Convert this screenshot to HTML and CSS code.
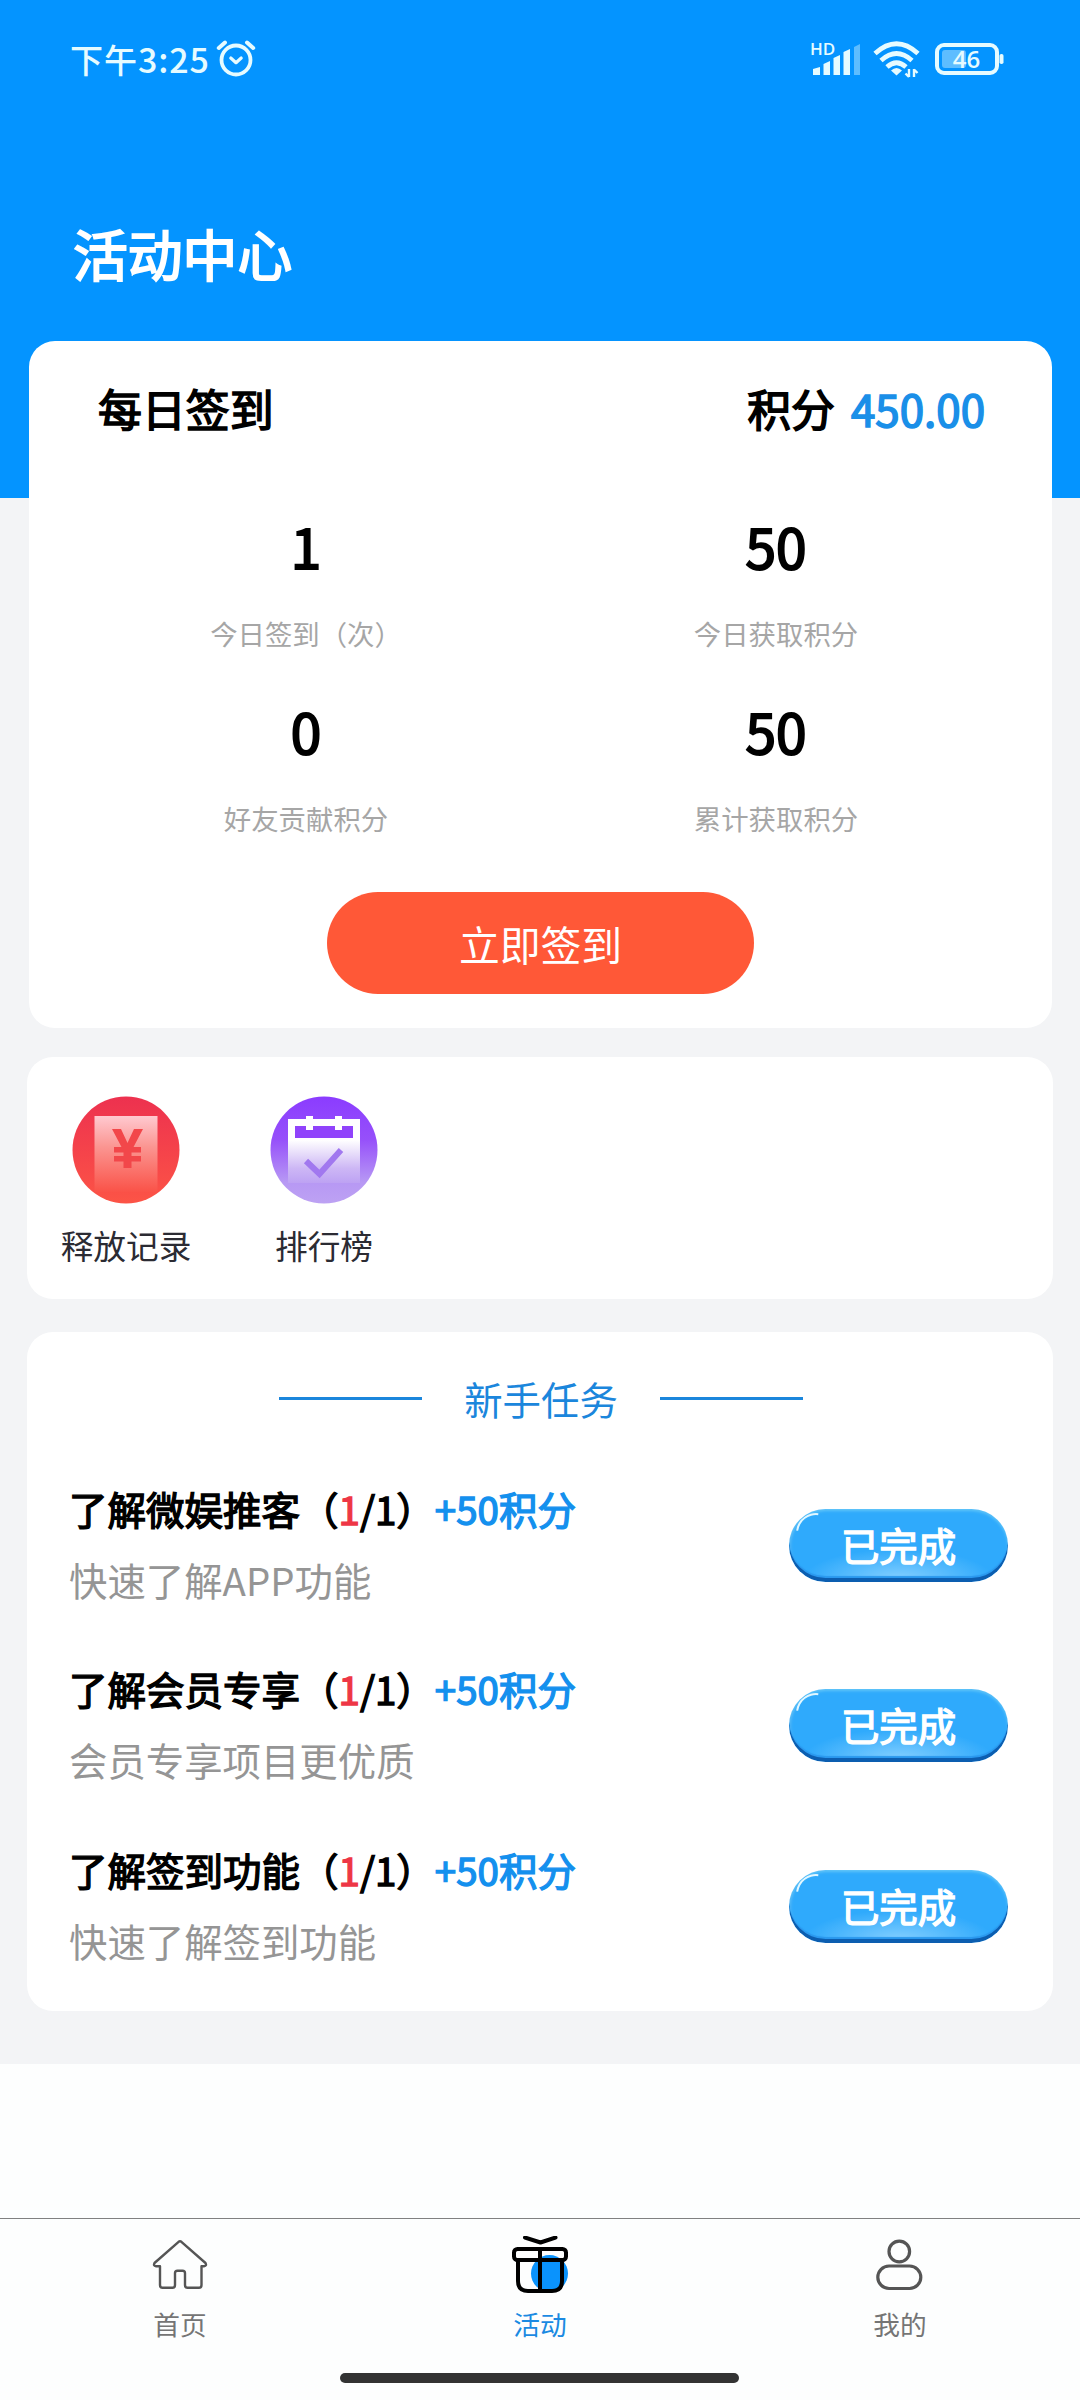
FILE: index.html
```html
<!DOCTYPE html>
<html lang="zh-CN">
<head>
<meta charset="utf-8">
<title>活动中心</title>
<link rel="stylesheet" href="styles.css">
</head>
<body>
<div class="screen">
  <header class="hero">
    <div class="status">
      <div class="status-left">
        <span class="clock">下午<span class="clock-digits">3:25</span></span>
        <svg class="alarm" width="40" height="38" viewBox="0 0 40 38" fill="none" stroke="#e6fbff" stroke-linecap="round" stroke-linejoin="round">
          <circle cx="20" cy="21" r="14.5" stroke-width="3.8"/>
          <path d="M14.800 19l5.200 4.700 5.200-4.700" stroke-width="3.2"/>
          <path d="M2.800 9l6.200-5.500M37.200 9l-6.200-5.500" stroke-width="4"/>
        </svg>
      </div>
      <div class="status-right">
        <div class="signal">
          <span class="hd">HD</span>
          <svg width="50" height="34" viewBox="0 0 50 34" fill="#e6fbff">
            <path d="M2 27l7-2v8H2zM12.500 22l6.500-3v14h-6.500zM22.500 16l6.500-3v20h-6.500zM32.500 10l6.500-3v26h-6.500z"/>
            <path d="M43 5l6-3v31h-6z" opacity=".4"/>
          </svg>
        </div>
        <svg class="wifi" width="48" height="38" viewBox="0 0 48 38" fill="none" stroke="#e6fbff" stroke-width="4.800">
          <path d="M2 13.500Q23.500-6 45 13.500M8 20.500Q23.500 6.500 39 20.500M14 27Q23.500 18.500 33 27"/>
          <path d="M23.500 35.500l-5.500-5q5.500-5 11 0z" fill="#e6fbff" stroke="none"/>
          <path d="M36 29v8M36 37l-3.500-3.500M41 37v-8M41 29.500l3.500 3.500" stroke-width="2.400"/>
        </svg>
        <svg class="battery" width="70" height="32" viewBox="0 0 70 32">
          <rect x="2" y="2" width="60" height="28" rx="7" fill="none" stroke="#e6fbff" stroke-width="4"/>
          <rect x="7" y="7" width="24" height="18" rx="3" fill="#e6fbff" opacity=".4"/>
          <rect x="64.500" y="11" width="4" height="10" rx="1.800" fill="#e6fbff"/>
          <text x="31.500" y="24.500" class="battery-text">46</text>
        </svg>
      </div>
    </div>
    <h1 class="page-title heavy">活动中心</h1>
  </header>

  <main class="content">
    <section class="card sign-card">
      <div class="sign-head">
        <span class="heavy">每日签到</span>
        <span class="heavy score">积分<span class="points">450.00</span></span>
      </div>
      <div class="stats">
        <div class="stat"><b class="stat-num heavy">1</b><span class="stat-label">今日签到（次）</span></div>
        <div class="stat"><b class="stat-num heavy">50</b><span class="stat-label">今日获取积分</span></div>
        <div class="stat"><b class="stat-num heavy">0</b><span class="stat-label">好友贡献积分</span></div>
        <div class="stat"><b class="stat-num heavy">50</b><span class="stat-label">累计获取积分</span></div>
      </div>
      <button class="sign-btn">立即签到</button>
    </section>

    <section class="card links">
      <a class="link">
        <svg width="108" height="108" viewBox="0 0 108 108">
          <defs>
            <linearGradient id="red" x1="0" y1="0" x2="0" y2="1"><stop offset="0" stop-color="#ed314f"/><stop offset="1" stop-color="#fc5446"/></linearGradient>
            <linearGradient id="paper" x1="0" y1="0" x2="0" y2="1"><stop offset="0" stop-color="#ffc9d0"/><stop offset=".4" stop-color="#fb9692"/><stop offset="1" stop-color="#fa5248"/></linearGradient>
          </defs>
          <circle cx="54" cy="54" r="53.500" fill="url(#red)"/>
          <path d="M22.500 20h63v76h-63z" fill="url(#paper)"/>
          <path d="M40 33h9l6.500 14L62 33h9L61.500 51H69v5.500H59.500V60H69v5.500h-9.500V72h-8v-6.500H42V60h9.500v-3.500H42V51h7.500z" fill="#f2474a"/>
        </svg>
        <span>释放记录</span>
      </a>
      <a class="link">
        <svg width="108" height="108" viewBox="0 0 108 108">
          <defs>
            <linearGradient id="violet" x1="0" y1="0" x2="0" y2="1"><stop offset="0" stop-color="#8b3cff"/><stop offset=".4" stop-color="#9650fa"/><stop offset=".8" stop-color="#b798f4"/><stop offset="1" stop-color="#bda2f3"/></linearGradient>
            <linearGradient id="page" x1="0" y1="0" x2="0" y2="1"><stop offset="0" stop-color="#fff"/><stop offset=".36" stop-color="#fff"/><stop offset=".78" stop-color="#cdb7f5"/><stop offset="1" stop-color="#bda2f3"/></linearGradient>
          </defs>
          <circle cx="54" cy="54" r="53.500" fill="url(#violet)"/>
          <path d="M18 23h18v-3h7v3h22v-3h7v3h18v64H18z" fill="url(#page)"/>
          <path d="M25 30h11v4h7v-4h22v4h7v-4h11v12H25z" fill="#9043fb"/>
          <path d="M36 65l13.500 13L71 54" fill="none" stroke="#a178ef" stroke-width="6"/>
        </svg>
        <span>排行榜</span>
      </a>
    </section>

    <section class="card tasks">
      <h2 class="tasks-title">新手任务</h2>
      <div class="task">
        <div class="task-text">
          <p class="task-name heavy">了解微娱推客（<i class="done">1</i>/1）<i class="bonus">+50积分</i></p>
          <p class="task-desc">快速了解APP功能</p>
        </div>
        <div class="badge heavy">已完成</div>
      </div>
      <div class="task">
        <div class="task-text">
          <p class="task-name heavy">了解会员专享（<i class="done">1</i>/1）<i class="bonus">+50积分</i></p>
          <p class="task-desc">会员专享项目更优质</p>
        </div>
        <div class="badge heavy">已完成</div>
      </div>
      <div class="task">
        <div class="task-text">
          <p class="task-name heavy">了解签到功能（<i class="done">1</i>/1）<i class="bonus">+50积分</i></p>
          <p class="task-desc">快速了解签到功能</p>
        </div>
        <div class="badge heavy">已完成</div>
      </div>
    </section>
  </main>

  <nav class="tabbar">
    <a class="tab">
      <svg width="60" height="60" viewBox="0 0 60 60" fill="none" stroke="#555" stroke-width="2.400" stroke-linejoin="round">
        <path d="M28.600 5.800q1.400-1 2.800 0L55.500 27q1.500 3-1.500 3.200h-2.500V49q0 2.800-2.500 2.800H37.500q-2.500 0-2.500-2.800V37q0-2.300-2.500-2.300h-5Q25 34.700 25 37v12q0 2.800-2.500 2.800H12.500Q10 51.800 10 49V30.200H6Q3 30 4.500 27z"/>
      </svg>
      <span>首页</span>
    </a>
    <a class="tab active">
      <svg width="60" height="60" viewBox="0 0 60 60" fill="none" stroke="#000" stroke-width="4" stroke-linecap="round" stroke-linejoin="round">
        <circle cx="39.500" cy="37.500" r="18.500" fill="#0a93fd" stroke="none"/>
        <rect x="4" y="13" width="52" height="11" rx="3.500"/>
        <path d="M30 13v42M8 24v21q0 10 10 10h24q10 0 10-10V24M15 1.500L30.500 6.500 45.500 1.500"/>
      </svg>
      <span>活动</span>
    </a>
    <a class="tab">
      <svg width="60" height="60" viewBox="0 0 60 60" fill="none" stroke="#555" stroke-width="3.200">
        <circle cx="29.300" cy="15.500" r="10.300"/>
        <rect x="7.800" y="30" width="43" height="22.500" rx="11.250"/>
      </svg>
      <span>我的</span>
    </a>
  </nav>
  <div class="home-indicator"></div>
</div>
</body>
</html>
```
FILE: styles.css
```css
* { box-sizing: border-box; margin: 0; padding: 0; }

body {
  width: 1080px;
  background: #fdfefe;
  font-family: "Noto Sans CJK SC", "Noto Sans", sans-serif;
  color: #000;
}

i { font-style: normal; }

/* regular glyph widths with thickened strokes */
.heavy { font-weight: 400; -webkit-text-stroke: 0.036em currentColor; }

.screen {
  height: 2400px;
  display: flex;
  flex-direction: column;
  overflow: hidden;
}

.hero {
  flex: none;
  height: 498px;
  background: #0494ff;
  color: #fff;
}

.status {
  height: 120px;
  padding: 0 75px 0 70px;
  display: flex;
  justify-content: space-between;
  color: #e6fbff;
}

.status-left { display: flex; gap: 6px; padding-top: 39px; }
.clock { font-size: 33px; line-height: 39px; font-weight: 500; letter-spacing: 1px; }
.clock-digits { font-size: 34px; letter-spacing: 0.900px; }
.status-right { display: flex; padding-top: 40px; }
.signal { position: relative; width: 62px; padding-top: 2px; }
.hd { position: absolute; left: -1px; top: 0; font: 600 17px/18px "Open Sans", sans-serif; }
.wifi { margin-right: 14px; }
.battery { margin-top: 3px; }
.battery-text { font: 600 24px "Open Sans", sans-serif; fill: #e6fbff; text-anchor: middle; }

.page-title {
  padding-left: 73px;
  margin-top: 92px;
  font-size: 54.800px;
  line-height: 80px;
}

.content {
  flex: none;
  height: 1566px;
  background: #f3f4f6;
  padding: 0 27px;
}

.card { background: #fff; border-radius: 26px; }

.sign-card {
  margin: -157px 1px 0 2px;
  height: 687px;
  display: flex;
  flex-direction: column;
  align-items: center;
}

.sign-head {
  align-self: stretch;
  display: flex;
  justify-content: space-between;
  padding: 35px 67px 0 69px;
  font-size: 43.900px;
  line-height: 64px;
}

.score { display: flex; gap: 16px; }
.points { color: #1a8fe8; }

.stats {
  align-self: stretch;
  display: grid;
  grid-template-columns: 1fr 1fr;
  grid-auto-rows: 184.500px;
  padding: 67px 41px 0 42px;
}

.stat { display: flex; flex-direction: column; align-items: center; }
.stat-num { font-size: 55px; line-height: 76px; }
.stat-label { margin-top: 30px; font-size: 27.400px; line-height: 40px; color: #a6a6a6; }

.sign-btn {
  margin-top: 16px;
  width: 427px;
  height: 102px;
  border: 0;
  border-radius: 51px;
  background: #ff5837;
  color: #fff;
  font: 400 40.800px/101px "Noto Sans CJK SC", sans-serif;
}

.links {
  margin-top: 29px;
  height: 242px;
  display: flex;
  padding: 39px 0 0;
}

.link {
  width: 198px;
  display: flex;
  flex-direction: column;
  align-items: center;
  gap: 17px;
  font-size: 32.700px;
  line-height: 48px;
  color: #2b2b33;
}

.tasks { margin-top: 33px; height: 679px; padding: 36px 45px 0 42px; }

.tasks-title {
  display: flex;
  align-items: center;
  justify-content: center;
  gap: 42px;
  margin-right: -5px;
  font-size: 38.400px;
  line-height: 60px;
  font-weight: 400;
  color: #1b86dc;
}

.tasks-title::before,
.tasks-title::after {
  content: "";
  width: 143px;
  height: 3px;
  background: #1b86dc;
}

.task { height: 180.400px; display: flex; justify-content: space-between; }
.task-text { padding-top: 50px; }
.task-name { font-size: 38.500px; line-height: 60px; white-space: nowrap; }
.done { color: #ee3646; }
.bonus { color: #1490ee; }
.task-desc { margin-top: 11px; font-size: 38.400px; line-height: 60px; color: #959595; }

.badge {
  position: relative;
  width: 219px;
  height: 73px;
  margin-top: 81px;
  border-radius: 36.500px;
  background: radial-gradient(ellipse 95px 30px at 50% 96%, #84cfff, rgba(132, 207, 255, 0)), #2faafc;
  box-shadow: inset 0 -4px 0 #0c5eb0, inset 0 -6px 1px #2a98ee, inset 0 2px 3px #5fc4f8, inset 2px 0 3px #4db3f6;
  color: #fff;
  font-size: 38.400px;
  line-height: 71px;
  text-align: center;
}

.badge::before {
  content: "";
  position: absolute;
  left: 7px;
  top: 4px;
  width: 36px;
  height: 36px;
  border-radius: 50%;
  border: 2.500px solid transparent;
  border-top-color: #e2f7ff;
  transform: rotate(-38deg);
}

.tabbar {
  margin-top: 154px;
  border-top: 1px solid #808080;
  display: flex;
  height: 150px;
}

.tab {
  flex: 1;
  display: flex;
  flex-direction: column;
  align-items: center;
  padding-top: 17px;
  font-size: 26.700px;
  line-height: 40px;
  color: #757575;
}

.tab span { margin-top: 8px; }
.active { color: #1b8ae2; }

.home-indicator {
  width: 399px;
  height: 10px;
  margin: 5px 0 0 340px;
  border-radius: 5px;
  background: #333;
}
```
